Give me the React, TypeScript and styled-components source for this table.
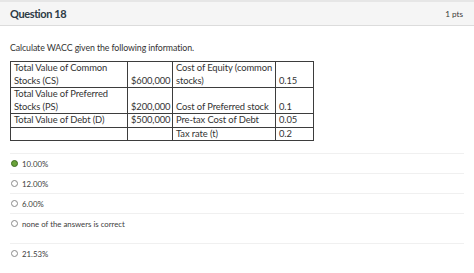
import React from "react";
import styled, { createGlobalStyle } from "styled-components";

const Global = createGlobalStyle`
  html, body { margin: 0; padding: 0; background: #fff; }
  body { font-family: Lato, "Open Sans", sans-serif; color: #2d3b45; }
`;

const Page = styled.div`
  width: 474px;
  height: 273px;
  overflow: hidden;
  border-top: 2px solid #e6e6e6;
  box-sizing: border-box;
`;

const Header = styled.div`
  display: flex;
  justify-content: space-between;
  align-items: center;
  height: 23px;
  padding: 0 11px 0 10px;
  background: #f5f5f5;
  border-bottom: 1px solid #dcdcdc;
`;

const Title = styled.div`
  font-size: 11px;
  font-weight: 700;
  letter-spacing: -0.4px;
  color: #2d3b45;
`;

const Points = styled.div`
  font-size: 8.2px;
  color: #3a3a3a;
`;

const Body = styled.div`
  padding: 16px 10px 0 10px;
`;

const Prompt = styled.div`
  font-size: 8.8px;
  letter-spacing: -0.1px;
  line-height: 11px;
  margin-bottom: 8px;
  color: #333;
`;

const Table = styled.table`
  border-collapse: collapse;
  table-layout: fixed;
  width: 303px;
  font-size: 9.4px;
  letter-spacing: -0.1px;
  line-height: 12.5px;
  color: #333;
`;

const Col = styled.col<{ $w: number }>`
  width: ${(p) => p.$w}px;
`;

const Cell = styled.td`
  border: 1px solid #3d3d3d;
  padding: 0 1px 0 3px;
  vertical-align: bottom;
  height: 12px;
  white-space: normal;
`;

const Options = styled.div`
  margin-top: 12px;
  display: flex;
  flex-direction: column;
`;

const Option = styled.div<{ $h: number }>`
  display: flex;
  align-items: flex-start;
  gap: 4px;
  height: ${(p) => p.$h}px;
  padding-top: 5px;
  box-sizing: border-box;
  border-top: 1px solid #f0f0f0;
  font-size: 7.8px;
  line-height: 10px;
  color: #3d3d3d;
`;

const Radio = styled.span<{ $on?: boolean }>`
  width: 7px;
  height: 7px;
  margin: 1px 0 0 1px;
  border-radius: 50%;
  box-sizing: border-box;
  border: 1px solid ${(p) => (p.$on ? "#3e6b1f" : "#8a8a8a")};
  background: ${(p) => (p.$on ? "#6aa33a" : "#fff")};
  flex: none;
`;

const widths = [117, 45, 103, 38];

const rows: string[][] = [
  ["Total Value of Common Stocks (CS)", "$600,000", "Cost of Equity (common stocks)", "0.15"],
  ["Total Value of Preferred Stocks (PS)", "$200,000", "Cost of Preferred stock", "0.1"],
  ["Total Value of Debt (D)", "$500,000", "Pre-tax Cost of Debt", "0.05"],
  ["", "", "Tax rate (t)", "0.2"],
];

const options = [
  { label: "10.00%", on: true, h: 20 },
  { label: "12.00%", h: 20 },
  { label: "6.00%", h: 20 },
  { label: "none of the answers is correct", h: 30 },
  { label: "21.53%", h: 20 },
];

export default function App() {
  return (
    <Page>
      <Global />
      <Header>
        <Title>Question 18</Title>
        <Points>1 pts</Points>
      </Header>
      <Body>
        <Prompt>Calculate WACC given the following information.</Prompt>
        <Table>
          <colgroup>
            {widths.map((w, i) => (
              <Col key={i} $w={w} />
            ))}
          </colgroup>
          <tbody>
            {rows.map((r, i) => (
              <tr key={i}>
                {r.map((c, j) => (
                  <Cell key={j}>{c}</Cell>
                ))}
              </tr>
            ))}
          </tbody>
        </Table>
        <Options>
          {options.map((o, i) => (
            <Option key={i} $h={o.h}>
              <Radio $on={o.on} />
              <span>{o.label}</span>
            </Option>
          ))}
        </Options>
      </Body>
    </Page>
  );
}
